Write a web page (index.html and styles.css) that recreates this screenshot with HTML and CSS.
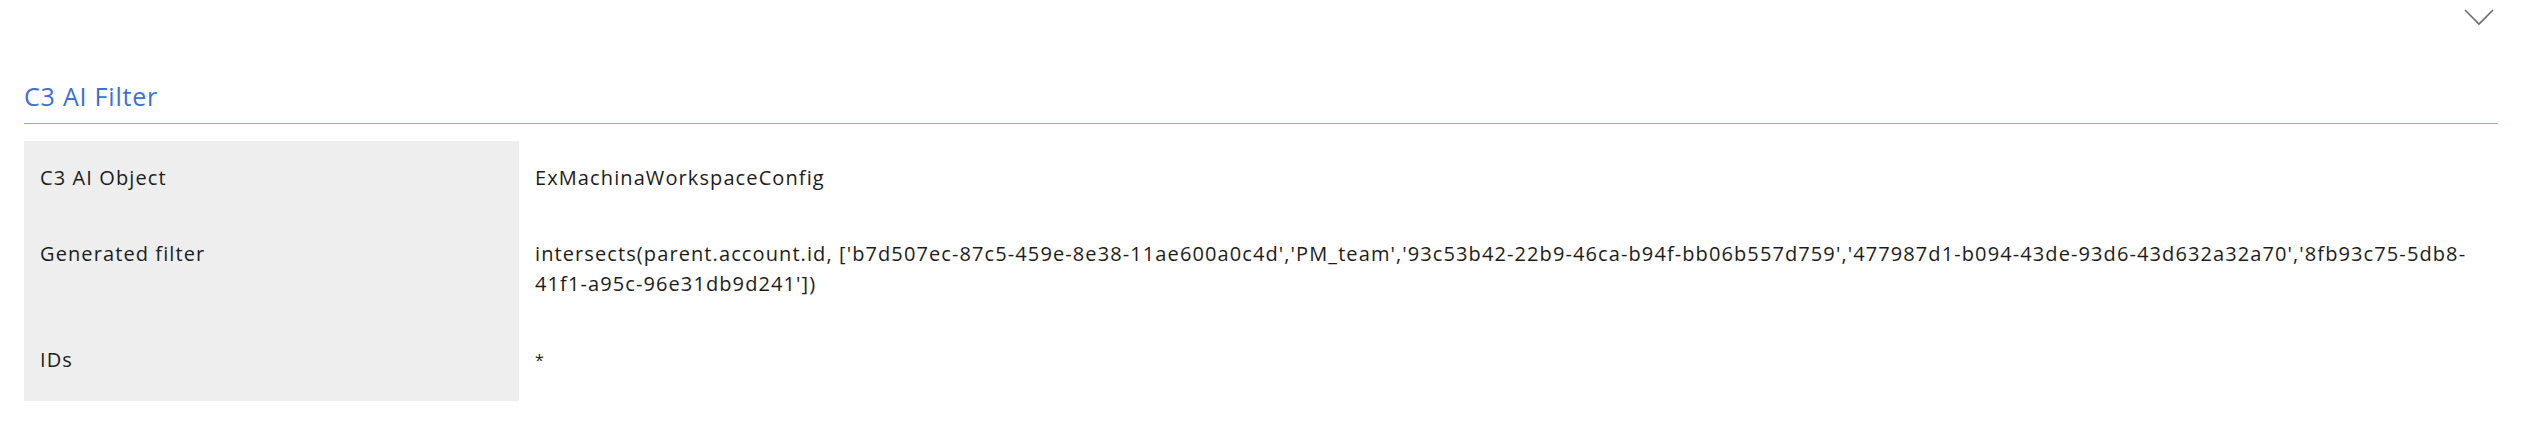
FILE: index.html
```html
<!DOCTYPE html>
<html lang="en">
<head>
<meta charset="utf-8">
<title>C3 AI Filter</title>
<link rel="stylesheet" href="styles.css">
</head>
<body>
<div class="panel">
  <div class="topbar">
    <button class="collapse" aria-label="Collapse">
      <svg width="32" height="18" viewBox="0 0 32 18"><path d="M2 2 L16 16 L30 2" fill="none" stroke="#6b6b6b" stroke-width="1.6"/></svg>
    </button>
  </div>
  <section class="section">
    <h2 class="section-title">C3 AI Filter</h2>
    <div class="table">
      <div class="label">C3 AI Object</div>
      <div class="value">ExMachinaWorkspaceConfig</div>
      <div class="label">Generated filter</div>
      <div class="value">intersects(parent.account.id, ['b7d507ec-87c5-459e-8e38-11ae600a0c4d','PM_team','93c53b42-22b9-46ca-b94f-bb06b557d759','477987d1-b094-43de-93d6-43d632a32a70','8fb93c75-5db8-41f1-a95c-96e31db9d241'])</div>
      <div class="label">IDs</div>
      <div class="value"><span class="star">*</span></div>
    </div>
  </section>
</div>
</body>
</html>
```
FILE: styles.css
```css
html, body {
  margin: 0;
  padding: 0;
  background: #ffffff;
}
body {
  font-family: "Open Sans", "Liberation Sans", sans-serif;
  color: #1c1c1c;
}
.panel {
  padding: 0 32px 0 24px;
}
.topbar {
  height: 81px;
  display: flex;
  justify-content: flex-end;
  align-items: flex-start;
}
.collapse {
  margin-top: 8px;
  margin-right: 3px;
  padding: 0;
  border: 0;
  background: none;
  display: flex;
}
.section-title {
  margin: 0;
  font-size: 25px;
  font-weight: 400;
  line-height: 30px;
  letter-spacing: 0.8px;
  color: #3d6fd6;
  padding-bottom: 12px;
  border-bottom: 1px solid #86a6e4;
}
.table {
  margin-top: 17px;
  display: grid;
  grid-template-columns: 495px 1fr;
  font-size: 20px;
  line-height: 30px;
  letter-spacing: 1.1px;
}
.label {
  background: #eeeeee;
  padding: 22px 16px 24px 16px;
}
.value {
  padding: 22px 16px 24px 16px;
}
.star {
  font-size: 16px;
  vertical-align: 3px;
}
```
